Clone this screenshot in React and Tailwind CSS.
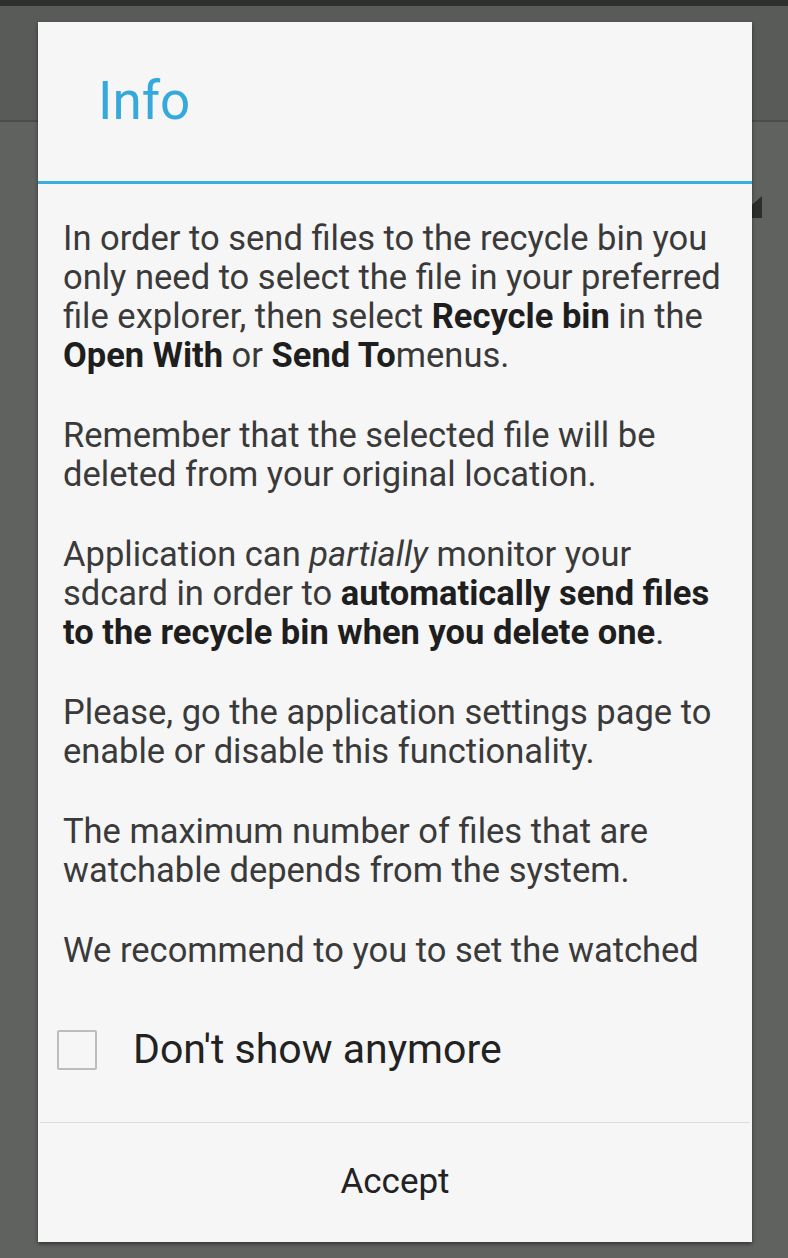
import React, { useState } from "react";

const font = { fontFamily: "Roboto, 'Noto Sans', sans-serif" };

function App() {
  const [checked, setChecked] = useState(false);

  return (
    <div className="relative w-[788px] h-[1258px] overflow-hidden bg-[#5e615d]" style={font}>
      {/* dimmed app behind the dialog */}
      <div className="flex flex-col h-full">
        <div className="h-[6px] bg-[#2f312f]" />
        <div className="h-[114px] bg-[#585b58]" />
        <div className="h-[2px] bg-[#4a4d4a]" />
        <div className="flex-1 bg-[#5f625e]" />
      </div>
      <div className="absolute left-[752px] top-[196px] w-[10px] h-[22px] bg-[#2c2e2c] [clip-path:polygon(100%_0,100%_100%,0_100%,0_40%)]" />

      {/* dialog */}
      <div className="absolute left-[38px] top-[22px] w-[714px] h-[1220px] bg-[#f6f6f6] flex flex-col shadow-[0_2px_4px_rgba(0,0,0,0.45)]">
        <div className="h-[159px] flex items-center pl-[60px]">
          <p className="text-[53px] leading-none text-[#35a9dc]">Info</p>
        </div>
        <div className="h-[3px] bg-[#3aaede]" />

        <div className="h-[789px] overflow-hidden px-[25px] pt-[35px] text-[34.5px] leading-[39px] text-[#3a3a3a] space-y-[41px] whitespace-nowrap">
          <p>
            In order to send files to the recycle bin you
            <br />
            only need to select the file in your preferred
            <br />
            file explorer, then select <b className="font-bold text-[#1e1e1e]">Recycle bin</b> in the
            <br />
            <b className="font-bold text-[#1e1e1e]">Open With</b> or <b className="font-bold text-[#1e1e1e]">Send To</b>menus.
          </p>
          <p>
            Remember that the selected file will be
            <br />
            deleted from your original location.
          </p>
          <p>
            Application can <i>partially</i> monitor your
            <br />
            sdcard in order to <b className="font-bold text-[#1e1e1e]">automatically send files</b>
            <br />
            <b className="font-bold text-[#1e1e1e]">to the recycle bin when you delete one</b>.
          </p>
          <p>
            Please, go the application settings page to
            <br />
            enable or disable this functionality.
          </p>
          <p>
            The maximum number of files that are
            <br />
            watchable depends from the system.
          </p>
          <p>We recommend to you to set the watched</p>
        </div>

        <div className="h-[149px] flex items-center pl-[19px] pt-[4px]">
          <button
            onClick={() => setChecked(!checked)}
            className="w-[40px] h-[40px] border-2 border-[#bdbdbd] rounded-[2px] flex items-center justify-center"
          >
            {checked && (
              <svg viewBox="0 0 24 24" className="w-[32px] h-[32px]" fill="none" stroke="#35a9dc" strokeWidth="3">
                <path d="M4 12l5 5L20 6" />
              </svg>
            )}
          </button>
          <span className="ml-[36px] text-[41px] leading-none text-[#222222]">Don't show anymore</span>
        </div>

        <div className="h-px bg-[#dddddd] mx-[2px]" />
        <button className="flex-1 flex items-center justify-center text-[35px] text-[#222222]">Accept</button>
      </div>
    </div>
  );
}

export default App;
